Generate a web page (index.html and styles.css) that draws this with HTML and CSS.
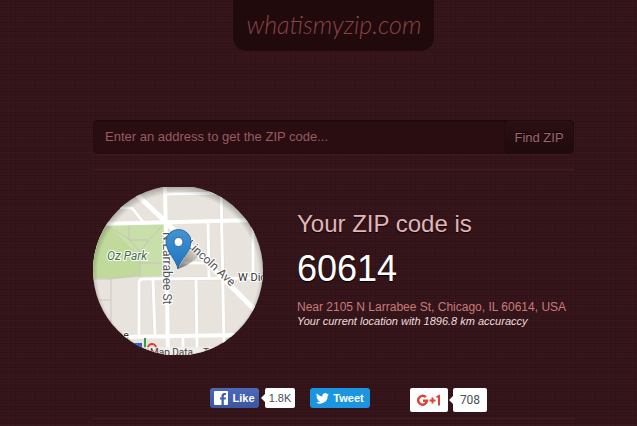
FILE: index.html
```html
<!DOCTYPE html>
<html lang="en">
<head>
  <meta charset="UTF-8">
  <meta name="viewport" content="width=device-width, initial-scale=1.0">
  <title>whatismyzip.com</title>
  <link rel="stylesheet" href="styles.css">
</head>
<body>

<div class="container">
  <header class="header">
    <a class="logo" href="#">whatismyzip.com</a>
  </header>

  <form class="search">
    <input class="search-input" type="text" aria-label="Address" placeholder="Enter an address to get the ZIP code...">
    <button class="search-btn" type="button">Find ZIP</button>
  </form>

  <main class="result">
    <div class="map">
      <svg viewBox="0 0 170 168" role="img" aria-label="Map of your location">
        <defs>
          <clipPath id="round"><circle cx="85" cy="83.5" r="85"/></clipPath>
          <linearGradient id="pin" x1="0" y1="0" x2="0" y2="1">
            <stop offset="0" stop-color="#4593d2"/>
            <stop offset="1" stop-color="#1c74bd"/>
          </linearGradient>
          <radialGradient id="edge" gradientUnits="userSpaceOnUse" cx="85" cy="87" r="89">
            <stop offset="0.9" stop-color="#000" stop-opacity="0"/>
            <stop offset="1" stop-color="#000" stop-opacity="0.3"/>
          </radialGradient>
          <linearGradient id="shade" x1="0" y1="1" x2="1" y2="0">
            <stop offset="0" stop-color="#000" stop-opacity="0.5"/>
            <stop offset="1" stop-color="#000" stop-opacity="0"/>
          </linearGradient>
        </defs>
        <g clip-path="url(#round)">
          <rect width="170" height="168" fill="#e8e4dd"/>
          <!-- park -->
          <path d="M12 38L71 37L74 89L48 90L17 92L0 91V38z" fill="#c9dfaa"/>
          <path d="M0 38H15L47 70V88L17 92L0 91z" fill="#c0da9c"/>
          <path d="M15 39L36 52L47 65L56 53L70 38M36 38V53L55 53M47 65V90M47 76H74" fill="none" stroke="#c3c5b4"/>
          <path d="M0 92L17 92L47 88M18 92V136M5 113H18" fill="none" stroke="#cbc6bf"/>
          <!-- streets -->
          <g fill="none" stroke="#dedad3" stroke-width="4">
            <path d="M74 7L140 6M128 0L131 160M115 35L116 92M160 34V92M27 21H39L51 36M90 76H116"/>
            <path d="M46 150V96Q46 92 50 92L170 91M60 92L62 150M103 92L104 160M90 150V168"/>
          </g>
          <g fill="none" stroke="#fff" stroke-width="3">
            <path d="M74 7L140 6M128 0L131 160M115 35L116 92M160 34V92M27 21H39L51 36M90 76H116"/>
            <path d="M46 150V96Q46 92 50 92L170 91M60 92L62 150M103 92L104 160M90 150V168"/>
          </g>
          <g fill="none" stroke="#fff" stroke-width="4">
            <path d="M5 37L165 33M72 0L75 168M30 150L145 148"/>
            <path d="M40 4L74 36L165 126" stroke-width="5"/>
          </g>
          <!-- labels -->
          <g class="map-text">
            <text x="14" y="73" class="park-text">Oz Park</text>
            <text transform="translate(70 45) rotate(90)">N Larrabee St</text>
            <text transform="translate(93 58) rotate(43)">Lincoln Ave</text>
            <text x="145" y="94" class="small-text">W Dickens</text>
            <text x="30" y="152" class="small-text">e</text>
          </g>
          <rect x="40" y="156" width="9" height="8" fill="#2b62d9"/>
          <path d="M52 151V164" stroke="#2f9e44" stroke-width="2"/>
          <circle cx="59" cy="161" r="4" fill="none" stroke="#e33b2e" stroke-width="2"/>
          <rect x="50" y="160" width="120" height="8" fill="#f3f0ec" fill-opacity="0.8"/>
          <text x="57" y="169" class="credit-text">Map Data</text>
          <text x="110" y="169" class="credit-text">Terms</text>
          <!-- pin -->
          <path d="M85 82L97 61Q108 60 107 66Q102 76 85 82z" fill="url(#shade)"/>
          <path d="M85 82C83 72 73 65 73 54.500A12.500 12 0 0 1 98 54.500C98 65 87 72 85 82z" fill="url(#pin)" stroke="#2a6ca8"/>
          <circle cx="85.500" cy="55" r="4.500" fill="#fff" stroke="#2367a3"/>
          <rect width="170" height="168" fill="url(#edge)"/>
        </g>
      </svg>
    </div>
    <div class="info">
      <h1 class="info-title">Your ZIP code is</h1>
      <div class="zip">60614</div>
      <div class="address">Near 2105 N Larrabee St, Chicago, IL 60614, USA</div>
      <div class="accuracy">Your current location with 1896.8 km accuraccy</div>
    </div>
  </main>

  <div class="social">
    <div class="share">
      <button class="btn btn-like" type="button">
        <svg width="14" height="14" viewBox="0 0 14 14" aria-hidden="true">
          <rect width="14" height="14" rx="1" fill="#fff"/>
          <path d="M7.500 14V8.500H6V6.500H7.500V5Q7.500 2 10.500 2H12V4H11Q9.800 4 9.800 5.200V6.500H12L11.700 8.500H9.800V14z" fill="#4261ad"/>
        </svg>
        Like
      </button>
      <span class="count">1.8K</span>
    </div>
    <button class="btn btn-tweet" type="button">
      <svg width="13" height="11" viewBox="0 0 24 20" aria-hidden="true">
        <path d="M24 2.400a10 10 0 0 1-2.800.8A5 5 0 0 0 23.300.4a10 10 0 0 1-3.100 1.200 4.900 4.900 0 0 0-8.400 4.500A14 14 0 0 1 1.700.9a4.900 4.900 0 0 0 1.500 6.600A5 5 0 0 1 1 6.900a4.900 4.900 0 0 0 3.900 4.900 5 5 0 0 1-2.200.1 4.900 4.900 0 0 0 4.600 3.400A10 10 0 0 1 0 17.300 14 14 0 0 0 21.500 4.900 10 10 0 0 0 24 2.400z" fill="#fff"/>
      </svg>
      Tweet
    </button>
    <div class="share share-plus">
      <button class="btn btn-plus" type="button" aria-label="Google +1">
        <svg width="24" height="13" viewBox="0 0 24 13" aria-hidden="true">
          <g fill="none" stroke="#db4437" stroke-width="2">
            <path d="M8.800 3.200A4.400 4.400 0 1 0 10 6.800H6" stroke-width="2.500"/>
            <path d="M12.500 6.500H18.500M15.500 3.500V9.500"/>
            <path d="M19.500 3.200L22 2V11.500"/>
          </g>
        </svg>
      </button>
      <span class="count count-plus">708</span>
    </div>
  </div>
</div>

</body>
</html>
```
FILE: styles.css
```css
* {
    box-sizing: border-box;
}

body {
    font-family: Arial, "Liberation Sans", sans-serif;
    margin: 0;
    background-color: #331419;
    background-image:
        repeating-linear-gradient(0deg, rgba(0,0,0,0.08) 0, rgba(0,0,0,0.08) 1px, transparent 1px, transparent 3px),
        repeating-linear-gradient(90deg, rgba(110,50,60,0.08) 0, rgba(110,50,60,0.08) 1px, transparent 1px, transparent 2px),
        repeating-linear-gradient(90deg, rgba(0,0,0,0.06) 0, rgba(0,0,0,0.06) 1px, transparent 1px, transparent 5px),
        repeating-linear-gradient(0deg, rgba(110,50,60,0.06) 0, rgba(110,50,60,0.06) 1px, transparent 1px, transparent 7px);
}

.container {
    padding: 0 63px 0 93px;
}

.header {
    display: flex;
    justify-content: center;
    margin-bottom: 69px;
}

.logo {
    height: 51px;
    padding: 8px 13px 0 14px;
    border-radius: 0 0 14px 14px;
    background-color: #200a0c;
    color: #8a4346;
    font-family: Lato, sans-serif;
    font-size: 25px;
    font-style: italic;
    font-weight: 300;
    line-height: 32px;
    text-decoration: none;
}

.search {
    display: flex;
    height: 34px;
    margin-bottom: 15px;
    border-radius: 5px;
    background-color: #290d11;
    box-shadow: inset 0 1px 2px #1c080b, 0 1px 0 #3d1a20;
}

.search-input {
    flex: 1;
    min-width: 0;
    padding: 0 12px 2px;
    border: none;
    background: none;
    color: #a0686c;
    font-family: inherit;
    font-size: 13px;
}

.search-input::placeholder {
    color: #965c60;
}

.search-btn {
    width: 70px;
    padding: 0;
    border: 1px solid #220a0e;
    border-radius: 5px;
    background: linear-gradient(#2b0f13, #1f0a0c);
    color: #a0686c;
    font-family: inherit;
    font-size: 13px;
    text-shadow: 0 -1px 0 #000;
    cursor: pointer;
}

.result {
    display: flex;
    gap: 34px;
    padding-top: 17px;
    border-top: 1px solid #451b21;
}

.map {
    flex: none;
    width: 170px;
    height: 168px;
}

.map svg {
    display: block;
}

.map-text {
    font-family: Roboto, sans-serif;
    font-size: 12px;
    fill: #555;
    stroke: #fff;
    stroke-width: 2px;
    paint-order: stroke;
}

.park-text {
    font-style: italic;
    fill: #45703f;
}

.small-text {
    font-size: 11px;
    fill: #333;
}

.credit-text {
    font-family: Roboto, sans-serif;
    font-size: 10px;
    fill: #444;
}

.info {
    padding-top: 23px;
    white-space: nowrap;
}

.info-title {
    margin: 0 0 15px;
    color: #e3b5b8;
    font-size: 24px;
    font-weight: normal;
    line-height: 28px;
    text-shadow: 0 1px 1px #000;
}

.zip {
    margin-bottom: 14px;
    color: #fff;
    font-size: 36px;
    line-height: 32px;
    text-shadow: 0 1px 1px #000;
}

.address {
    color: #c9797a;
    font-size: 12px;
    line-height: 16px;
}

.accuracy {
    color: #f0dcdc;
    font-size: 11px;
    font-style: italic;
    line-height: 13px;
}

.social {
    display: flex;
    align-items: flex-start;
    gap: 15px;
    margin-top: 33px;
    padding: 0 87px 6px 117px;
    border-bottom: 1px solid #451b21;
}

.share {
    display: flex;
    gap: 6px;
}

.share-plus {
    gap: 5px;
    margin-left: 25px;
}

.btn {
    display: flex;
    align-items: center;
    justify-content: center;
    gap: 4px;
    height: 20px;
    padding: 0;
    border: none;
    border-radius: 3px;
    color: #fff;
    font-family: inherit;
    font-size: 11px;
    font-weight: bold;
    cursor: pointer;
}

.btn-like {
    width: 49px;
    background: linear-gradient(#4c69ba, #3b55a0);
}

.btn-tweet {
    width: 60px;
    background-color: #1b95e0;
}

.btn-plus {
    width: 38px;
    height: 24px;
    border-radius: 2px;
    background-color: #fff;
}

.count {
    position: relative;
    width: 30px;
    border-radius: 2px;
    background-color: #fff;
    color: #4b4f56;
    font-size: 11px;
    line-height: 20px;
    text-align: center;
}

.count::before {
    content: "";
    position: absolute;
    top: 50%;
    right: 100%;
    transform: translateY(-50%);
    border: 4px solid transparent;
    border-left: none;
    border-right-color: #fff;
}

.count-plus {
    width: 34px;
    font-family: Roboto, sans-serif;
    font-size: 12px;
    line-height: 24px;
}
```
